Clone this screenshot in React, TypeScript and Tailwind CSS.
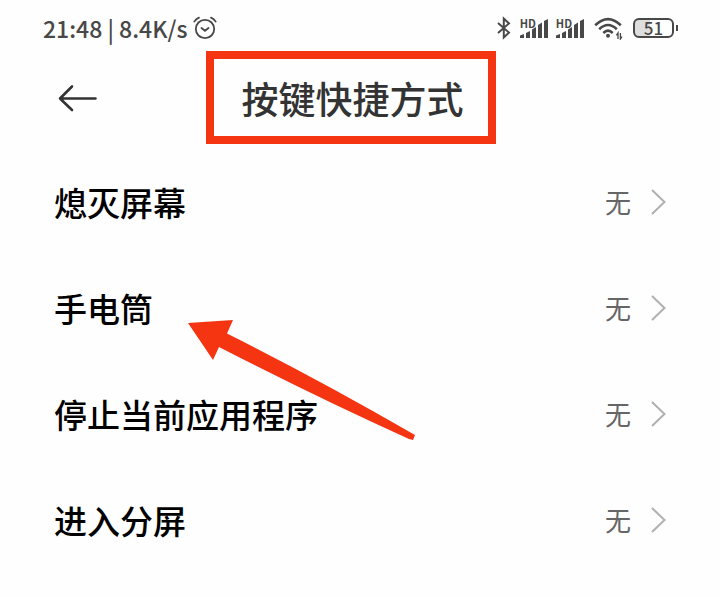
import React from 'react'

interface Shortcut {
  id: string
  label: string
  value: string
}

const shortcuts: Shortcut[] = [
  { id: 'screen-off', label: '熄灭屏幕', value: '无' },
  { id: 'torch', label: '手电筒', value: '无' },
  { id: 'close-app', label: '停止当前应用程序', value: '无' },
  { id: 'split-screen', label: '进入分屏', value: '无' },
]

function AlarmIcon() {
  return (
    <svg width="24" height="24" viewBox="0 0 24 24" fill="none" stroke="currentColor" strokeWidth="1.8" strokeLinecap="round">
      <circle cx="12" cy="13" r="9.2" />
      <path d="M8.5 12l3.5 2.8 3.5-2.8" />
      <path d="M1.3 5.6Q3 2.8 6 1.7M22.7 5.6Q21 2.8 18 1.7" />
    </svg>
  )
}

function BluetoothIcon() {
  return (
    <svg width="16" height="24" viewBox="0 0 16 24" fill="none" stroke="currentColor" strokeWidth="2">
      <path d="M2 7l11 9.6-5.2 4.9V2.5L13 7.4 2 17" />
    </svg>
  )
}

function SignalIcon() {
  return (
    <div className="flex items-end">
      <span className="-mr-4 self-start text-[11px] leading-[10px] font-bold">HD</span>
      <svg width="28" height="21" viewBox="0 0 28 21" fill="currentColor">
        <path d="M0 20v-2.500l4-1.500v4zM6 20v-5l4-2V20zM12 20v-8.500l4-2.500V20zM18 20V7l4-2.500V20zM24 20V3l4-2V20z" />
      </svg>
    </div>
  )
}

function WifiIcon() {
  return (
    <svg width="29" height="24" viewBox="0 0 29 24" fill="none" stroke="currentColor" strokeWidth="2.6">
      <path d="M1.200 9.300Q14 -3 26.800 9.300" />
      <path d="M5.200 13.200Q14 4.800 22.800 13.200" />
      <path d="M9.300 17Q14 12.400 18.700 17" />
      <circle cx="14" cy="19.800" r="2" fill="currentColor" stroke="none" />
      <path d="M24 23v-6l-1.600 2.400M26.400 17v6l1.600-2.400" strokeWidth="1.3" />
    </svg>
  )
}

function Battery() {
  return (
    <div className="flex items-center">
      <div className="flex h-5 w-[41px] items-center justify-center rounded-md border-2 border-current bg-linear-to-r from-[#dedede] from-40% to-white to-40% text-[17px] leading-4 font-medium">
        51
      </div>
      <div className="ml-0.5 h-1.5 w-0.5 bg-current" />
    </div>
  )
}

function StatusBar() {
  return (
    <div className="flex h-[51px] items-center justify-between pt-[5px] pr-[42px] pl-[43px] text-[#484848]">
      <div className="flex items-center gap-1.5 text-[23px] leading-6 font-medium">
        <span>21:48 | 8.4K/s</span>
        <AlarmIcon />
      </div>
      <div className="flex items-center gap-2">
        <BluetoothIcon />
        <SignalIcon />
        <SignalIcon />
        <div className="flex items-center gap-2.5 pl-0.5">
          <WifiIcon />
          <Battery />
        </div>
      </div>
    </div>
  )
}

function Header() {
  return (
    <header className="grid grid-cols-[1fr_auto_1fr] items-center pr-[77px] pl-[58px] text-[#333]">
      <button type="button" aria-label="返回" className="justify-self-start">
        <svg width="39" height="28" viewBox="0 0 39 28" fill="none" stroke="currentColor" strokeWidth="2.6" strokeLinecap="round" strokeLinejoin="round">
          <path d="M37.500 14.500H2M14 2.500L2 14.500l12 11.500" />
        </svg>
      </button>
      <h1 className="flex h-[93px] items-center border-8 border-[#f53511] pr-6 pl-7 text-[37px] leading-[52px] font-medium">
        按键快捷方式
      </h1>
    </header>
  )
}

function ShortcutRow({ label, value }: Shortcut) {
  return (
    <li>
      <button type="button" className="flex h-[106px] w-full items-center justify-between px-[54px] text-left">
        <span className="text-[33px] leading-10 font-medium text-black">{label}</span>
        <span className="flex items-center gap-5 text-[26px] leading-10 text-[#666]">
          {value}
          <svg width="15" height="26" viewBox="0 0 15 26" fill="none" stroke="#b0b0b0" strokeWidth="2">
            <path d="M1 1l12.500 12L1 25" />
          </svg>
        </span>
      </button>
    </li>
  )
}

export default function App() {
  return (
    <div className="relative min-h-screen bg-[#fefefe] font-['Noto_Sans_CJK_SC',sans-serif]" lang="zh-CN">
      <StatusBar />
      <Header />
      <ul className="pt-[5px]">
        {shortcuts.map((item) => (
          <ShortcutRow key={item.id} {...item} />
        ))}
      </ul>
      {/* pointer towards the torch entry */}
      <svg className="pointer-events-none absolute top-80 left-[188px]" width="228" height="121" viewBox="0 0 228 121" fill="#f53511" aria-hidden="true">
        <path d="M0 3L45 0l-6 13.500Q132 60 227 115l-2 5-4-1Q130 78 31 27l-6 13z" />
      </svg>
    </div>
  )
}
